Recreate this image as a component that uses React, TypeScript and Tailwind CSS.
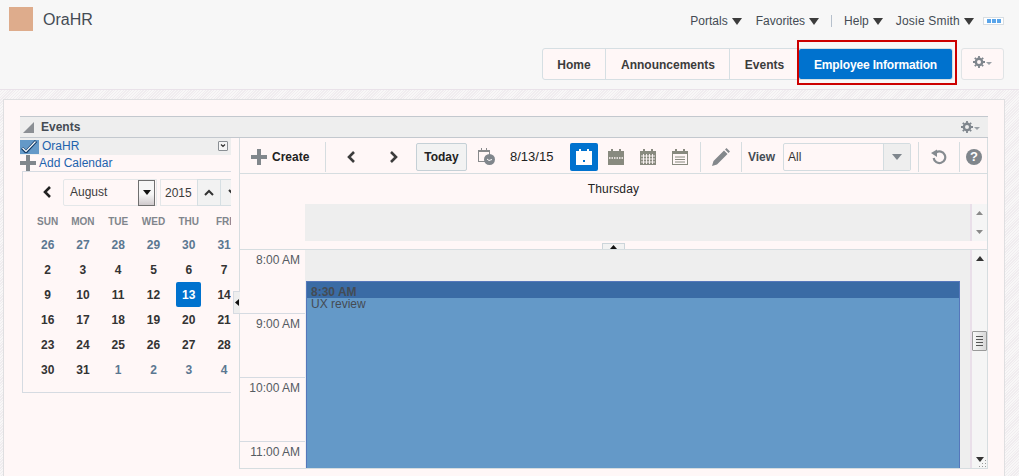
import React from 'react';

const WEEKS = [
  [26, 27, 28, 29, 30, 31, 1],
  [2, 3, 4, 5, 6, 7, 8],
  [9, 10, 11, 12, 13, 14, 15],
  [16, 17, 18, 19, 20, 21, 22],
  [23, 24, 25, 26, 27, 28, 29],
  [30, 31, 1, 2, 3, 4, 5],
];
const DAYS = ['SUN', 'MON', 'TUE', 'WED', 'THU', 'FRI', 'SAT'];
const HOURS = ['8:00 AM', '9:00 AM', '10:00 AM', '11:00 AM'];

const Caret = () => (
  <svg width="10" height="7" viewBox="0 0 10 7" className="shrink-0">
    <path d="M0 0h10L5 7z" fill="#3c3c3c" />
  </svg>
);

const Gear = () => (
  <svg width="19" height="12" viewBox="0 0 19 12">
    <circle cx="6" cy="6" r="3.200" fill="none" stroke="#7f868d" strokeWidth="2.400" />
    <path d="M6 0v2M6 10v2M0 6h2M10 6h2M1.800 1.800l1.400 1.400M8.800 8.800l1.400 1.400M1.800 10.200l1.400-1.400M8.800 3.200l1.400-1.400" stroke="#7f868d" strokeWidth="1.800" />
    <path d="M13 6h6l-3 3z" fill="#9aa0a6" />
  </svg>
);

const Plus = ({ size }: { size: number }) => (
  <svg width={size} height={size} viewBox="0 0 16 16" className="shrink-0">
    <path d="M6 0h4v6h6v4h-6v6H6v-6H0V6h6z" fill="#81878c" />
  </svg>
);

const Chevron = ({ dir, color = '#3c3c3c' }: { dir: 'left' | 'right'; color?: string }) => (
  <svg width="9" height="12" viewBox="0 0 9 12" className="shrink-0">
    <path d={dir === 'left' ? 'M7 1L2 6l5 5' : 'M2 1l5 5-5 5'} fill="none" stroke={color} strokeWidth="2.600" />
  </svg>
);

// shared calendar glyph, the body differs per view
const CalIcon = ({ kind }: { kind: 'day' | 'week' | 'month' | 'list' }) => {
  const color = kind === 'day' ? '#ffffff' : '#888a7f';
  return (
    <svg width="16" height="16" viewBox="0 0 16 16" className="shrink-0">
      <path d="M3 0h2v2h6V0h2v2h3v14H0V2h3z" fill={color} />
      {kind === 'day' && <rect x="7" y="11" width="2" height="2" fill="#0072ce" />}
      {kind === 'week' && <path d="M1 9h14" stroke="#fff7f7" strokeWidth="1.500" strokeDasharray="1.500 1" />}
      {kind === 'month' && (
        <path d="M1 7h14M1 10h14M1 13h14M3.500 5v10M6.500 5v10M9.500 5v10M12.500 5v10" stroke="#fff7f7" strokeWidth="0.900" />
      )}
      {kind === 'list' && (
        <>
          <rect x="1" y="5" width="14" height="10" fill="#fff7f7" />
          <path d="M3 8h10M3 10.500h10M3 13h10" stroke="#888a7f" strokeWidth="1" />
        </>
      )}
    </svg>
  );
};

const Sep = () => <div className="h-[30px] w-px shrink-0 bg-[#d6dde0]" />;

const App: React.FC = () => {
  return (
    <div className="relative h-[476px] w-[1019px] overflow-hidden bg-[#f7f7f7] font-['Liberation_Sans',Arial,sans-serif] text-xs text-[#3c3c3c]">
      {/* Header */}
      <header className="h-[89px] px-[9px]">
        <div className="flex h-10 items-start justify-between">
          <div className="flex items-center pt-[5px]">
            <div className="h-6 w-6 bg-[#deac8c]" />
            <span className="mt-[3px] ml-2.5 text-base text-[#444b54]">OraHR</span>
          </div>
          <nav className="mr-[6px] flex h-10 items-center pt-0.5 text-[#444b54]">
            <span>Portals</span>
            <span className="mr-[14px] ml-1"><Caret /></span>
            <span>Favorites</span>
            <span className="ml-1"><Caret /></span>
            <div className="mx-3 h-3 w-px bg-[#b6c0cc]" />
            <span>Help</span>
            <span className="mr-[13px] ml-1"><Caret /></span>
            <span className="tracking-[0.2px]">Josie Smith</span>
            <span className="mr-[9px] ml-1"><Caret /></span>
            <div className="flex h-2 w-[21px] items-center justify-center gap-px border border-[#d7dde2] bg-white">
              <div className="h-1 w-1 bg-[#5aa5ea]" />
              <div className="h-1 w-1 bg-[#5aa5ea]" />
              <div className="h-1 w-1 bg-[#5aa5ea]" />
            </div>
          </nav>
        </div>
        <div className="mt-2 mr-[6px] flex justify-end">
          <div className="flex h-8 items-stretch rounded-[3px] border border-[#d6dfe3] bg-[#fff7f7] font-bold">
            <div className="flex w-[63px] items-center justify-center border-r border-[#d6dfe3] pt-px">Home</div>
            <div className="flex w-[124px] items-center justify-center border-r border-[#d6dfe3] pt-px pl-px">Announcements</div>
            <div className="flex w-[69px] items-center justify-center pt-px">Events</div>
            <div className="flex w-[153px] items-center justify-center rounded-[2px] bg-[#0072ce] pt-px tracking-[-0.15px] text-white">Employee Information</div>
          </div>
          <div className="ml-2 flex h-8 w-[43px] items-center justify-center rounded-[3px] border border-[#e0e4e6] bg-[#fff7f7] pb-1">
            <Gear />
          </div>
        </div>
      </header>

      {/* Hatched page background */}
      <main className="h-[387px] border-t border-[#e9e2e9] bg-[repeating-linear-gradient(135deg,#f8f7f7_0,#f8f7f7_1px,#f0ecef_1px,#f0ecef_2px)] pt-[9px] pr-[14px] pl-[3px]">
        <div className="h-[400px] border border-[#dfdfe1] bg-[#fff7f7] pt-4 pr-4 pl-4">
          {/* Events title bar */}
          <div className="flex h-[22px] items-center border-y border-y-[#c3c8ce] bg-[#eeeeee] pr-2 pl-[3px]">
            <svg width="11" height="11" viewBox="0 0 11 11">
              <path d="M11 0v11H0z" fill="#8b8f94" />
            </svg>
            <span className="ml-[7px] font-bold text-[#444b54]">Events</span>
            <span className="ml-auto flex"><Gear /></span>
          </div>

          <div className="relative flex">
            {/* Calendars side */}
            <div className="w-[211px] shrink-0 overflow-hidden">
              <div className="flex h-[17px] items-center bg-[#eeeeee]">
                <div className="flex h-[14px] w-[19px] items-center bg-[#6499c8] pl-px">
                  <svg width="16" height="13" viewBox="0 0 16 13">
                    <path d="M1 8l4 4L15 1" fill="none" stroke="#123a66" strokeWidth="3" />
                    <path d="M1.500 8l3.500 3.500L14.500 1.500" fill="none" stroke="#ffffff" strokeWidth="1.200" />
                  </svg>
                </div>
                <span className="mb-0.5 ml-[3px] text-[#1e63ad]">OraHR</span>
                <div className="mr-[3px] mb-px ml-auto flex h-[10px] w-[10px] items-center justify-center rounded-[1px] border border-[#8a8f94] bg-[#f5f5f5]">
                  <svg width="6" height="4" viewBox="0 0 6 4">
                    <path d="M1 0.500l2 2 2-2" fill="none" stroke="#333333" strokeWidth="1.200" />
                  </svg>
                </div>
              </div>
              <div className="flex h-4 items-center">
                <Plus size={16} />
                <span className="ml-[3px] text-[#1e63ad]">Add Calendar</span>
              </div>
              <div className="ml-[2px] h-[222px] border-y border-l border-[#d6dbe2]">
                <div className="flex h-[34px] items-end">
                  <div className="mb-2 flex w-10 shrink-0 justify-center pl-2"><Chevron dir="left" color="#222222" /></div>
                  <div className="flex h-[27px] w-[94px] shrink-0 items-center justify-between rounded-l-[2px] border border-[#e4e7e9] pl-1.5">
                    <span className="mb-px">August</span>
                    <div className="mr-px flex h-[26px] w-[17px] items-center justify-center border border-[#6f6f6f] bg-[linear-gradient(#f6f6f6,#f6f6f6_55%,#cfc9cc)]">
                      <svg width="8" height="5" viewBox="0 0 8 5"><path d="M0 0h8L4 5z" fill="#111111" /></svg>
                    </div>
                  </div>
                  <div className="ml-[3px] flex h-[27px] w-[37px] shrink-0 items-center border-y border-l border-[#e4e7e9] pl-1 whitespace-nowrap">2015</div>
                  <div className="flex h-[27px] w-6 shrink-0 items-center justify-center border border-[#d6dfe3] bg-[#f2f2f2]">
                    <svg width="10" height="7" viewBox="0 0 10 7"><path d="M1 6l4-4 4 4" fill="none" stroke="#333333" strokeWidth="2" /></svg>
                  </div>
                  <div className="flex h-[27px] w-6 shrink-0 items-center justify-center border-y border-[#d6dfe3] bg-[#f2f2f2]">
                    <svg width="10" height="7" viewBox="0 0 10 7"><path d="M1 1l4 4 4-4" fill="none" stroke="#333333" strokeWidth="2" /></svg>
                  </div>
                </div>
                <div className="mt-[5px] ml-[7px] grid w-[247px] grid-cols-7 text-center">
                  {DAYS.map((d) => (
                    <div key={d} className="h-[21px] text-[10px] leading-[21px] font-bold text-[#80858c]">{d}</div>
                  ))}
                  {WEEKS.map((week, w) =>
                    week.map((n, i) => {
                      const muted = (w === 0 && n > 20) || (w === 5 && n < 20);
                      const today = w === 2 && n === 13;
                      return (
                        <div key={`${w}-${i}`} className="flex h-[25px] items-center justify-center">
                          <span
                            className={
                              today
                                ? 'flex h-[25px] w-[25px] items-center justify-center rounded-[2px] bg-[#0072ce] font-bold text-white'
                                : muted
                                  ? 'font-bold text-[#5b7791]'
                                  : 'font-bold text-[#333333]'
                            }
                          >
                            {n}
                          </span>
                        </div>
                      );
                    }),
                  )}
                </div>
              </div>
            </div>

            {/* Splitter handle */}
            <div className="absolute top-[153px] left-[213px] flex h-[23px] w-[7px] items-center justify-center border-y border-l border-[#d6dbe2] bg-[#eeeeee]">
              <svg width="4" height="7" viewBox="0 0 4 7"><path d="M4 0v7L0 3.500z" fill="#111111" /></svg>
            </div>

            {/* Calendar main */}
            <div className="ml-2 h-[331px] w-[749px] shrink-0 border-x border-b border-[#d6dde0]">
              {/* Toolbar */}
              <div className="flex h-9 items-center border-b border-[#d6dde0] pt-0.5">
                <div className="ml-[11px]"><Plus size={16} /></div>
                <span className="ml-[5px] w-[38px] font-bold text-[#222222]">Create</span>
                <div className="ml-[15px]"><Sep /></div>
                <div className="ml-[21px]"><Chevron dir="left" /></div>
                <div className="ml-[33px]"><Chevron dir="right" /></div>
                <div className="ml-[18px] flex h-7 w-[51px] items-center justify-center rounded-[2px] border border-[#c5d0d6] bg-[#f2f2f2] font-bold text-[#222222]">Today</div>
                <svg width="17" height="17" viewBox="0 0 17 17" className="ml-[11px] shrink-0">
                  <rect x="0.500" y="2.500" width="11" height="11" fill="none" stroke="#888a8c" />
                  <path d="M0 2h12v2H0zM3 0h1v3H3zM8 0h1v3H8z" fill="#888a8c" />
                  <circle cx="11.500" cy="11.500" r="5.500" fill="#80868c" />
                  <path d="M9 11l2 1.500 3-1" fill="none" stroke="#ffffff" />
                </svg>
                <span className="ml-[15px] w-[44px] text-[13px] whitespace-nowrap text-[#222222]">8/13/15</span>
                <div className="ml-4 flex h-7 w-7 items-center justify-center rounded-[2px] bg-[#0072ce]">
                  <CalIcon kind="day" />
                </div>
                <div className="ml-[10px]"><CalIcon kind="week" /></div>
                <div className="ml-4"><CalIcon kind="month" /></div>
                <div className="ml-4"><CalIcon kind="list" /></div>
                <div className="ml-3"><Sep /></div>
                <svg width="18" height="18" viewBox="0 0 18 18" className="ml-[11px] shrink-0">
                  <path d="M0 18l1.500-5L12 2.500 15.500 6 5 16.500zM13 1.500L14.500 0 18 3.500 16.500 5z" fill="#84888c" />
                </svg>
                <div className="ml-[11px]"><Sep /></div>
                <span className="ml-[6px] w-[28px] font-bold text-[#444b54]">View</span>
                <div className="ml-[7px] flex h-7 w-[128px] items-stretch rounded-[2px] border border-[#d3dce0]">
                  <span className="flex flex-1 items-center pl-1 text-[#333333]">All</span>
                  <div className="flex w-[27px] items-center justify-center border-l border-[#d3dce0] bg-[#eeeeee]">
                    <svg width="10" height="6" viewBox="0 0 10 6"><path d="M0 0h10L5 6z" fill="#7f868d" /></svg>
                  </div>
                </div>
                <div className="ml-[7px]"><Sep /></div>
                <svg width="16" height="16" viewBox="0 0 16 16" className="ml-3 shrink-0">
                  <path d="M5 3.600A5.800 5.800 0 1 1 2.700 9" fill="none" stroke="#868b90" strokeWidth="2.200" />
                  <path d="M0 4l6-3.500V8z" fill="#868b90" />
                </svg>
                <div className="ml-3"><Sep /></div>
                <div className="ml-[6px] flex h-4 w-4 items-center justify-center rounded-full bg-[#80868c] text-[13px] font-bold text-white">?</div>
              </div>

              {/* Day header */}
              <div className="flex h-[30px] items-center">
                <div className="w-[65px] shrink-0" />
                <div className="w-[617px] text-center tracking-[0.2px] text-[#222222]">Thursday</div>
              </div>

              {/* All day */}
              <div className="flex h-[37px]">
                <div className="w-[65px] shrink-0" />
                <div className="flex-1 bg-[#eeeeee]" />
                <div className="flex w-[17px] flex-col items-center justify-between border-l-2 border-[#e9dfe9] bg-[#f5f5f5] py-[7px]">
                  <svg width="7" height="4" viewBox="0 0 7 4"><path d="M3.500 0L7 4H0z" fill="#8a8a8a" /></svg>
                  <svg width="7" height="4" viewBox="0 0 7 4"><path d="M0 0h7L3.500 4z" fill="#8a8a8a" /></svg>
                </div>
              </div>

              {/* Horizontal splitter */}
              <div className="relative h-[9px] border-b border-[#d6dde0]">
                <div className="absolute top-0.5 left-[362px] flex h-[6px] w-[23px] items-center justify-center border-x border-t border-[#ccd5da] bg-[#f2f2f2]">
                  <svg width="7" height="4" viewBox="0 0 7 4"><path d="M3.500 0L7 4H0z" fill="#111111" /></svg>
                </div>
              </div>

              {/* Hour grid */}
              <div className="flex h-[218px] overflow-hidden">
                <div className="w-[65px] shrink-0 text-[#555b62]">
                  {HOURS.map((h) => (
                    <div key={h} className="h-[64px] border-b border-[#d6dbe2] pt-0.5 pr-[5px] text-right">{h}</div>
                  ))}
                </div>
                <div className="relative flex-1 bg-[#eeeeee]">
                  {/* Event */}
                  <div className="absolute top-[31px] left-px h-[187px] w-[654px] border-t border-r border-l border-[#5577bb] bg-[#6499c8] text-[#444b54]">
                    <div className="h-4 bg-[#3a6ba5] pt-[3px] pl-[4px] leading-[14px] font-bold">8:30 AM</div>
                    <div className="pl-[4px] leading-[12px]">UX review</div>
                  </div>
                </div>
                <div className="relative flex w-[17px] flex-col items-center justify-between border-l-2 border-[#e9dfe9] bg-[#f5f5f5] py-[6px]">
                  <svg width="8" height="5" viewBox="0 0 8 5"><path d="M4 0l4 5H0z" fill="#333333" /></svg>
                  <div className="absolute top-[81px] left-0 flex h-5 w-[15px] flex-col items-center justify-center gap-[2px] rounded-[1px] border border-[#9a9a9a] bg-[linear-gradient(90deg,#f8f8f8,#d8d8d8)]">
                    <div className="h-px w-[7px] bg-[#555555]" />
                    <div className="h-px w-[7px] bg-[#555555]" />
                    <div className="h-px w-[7px] bg-[#555555]" />
                    <div className="h-px w-[7px] bg-[#555555]" />
                  </div>
                  <svg width="8" height="5" viewBox="0 0 8 5"><path d="M0 0h8L4 5z" fill="#333333" /></svg>
                  <svg width="9" height="9" viewBox="0 0 9 9" className="absolute right-0 bottom-0">
                    <path d="M7 1h1v1H7zM4 4h1v1H4zM7 4h1v1H7zM1 7h1v1H1zM4 7h1v1H4zM7 7h1v1H7z" fill="#9a9a9a" />
                  </svg>
                </div>
              </div>
            </div>
          </div>
        </div>
      </main>

      {/* Highlight drawn round the active tab */}
      <div className="absolute top-10 left-[797px] h-[45px] w-[160px] border-2 border-[#cc0000]" />
    </div>
  );
};

export default App;
